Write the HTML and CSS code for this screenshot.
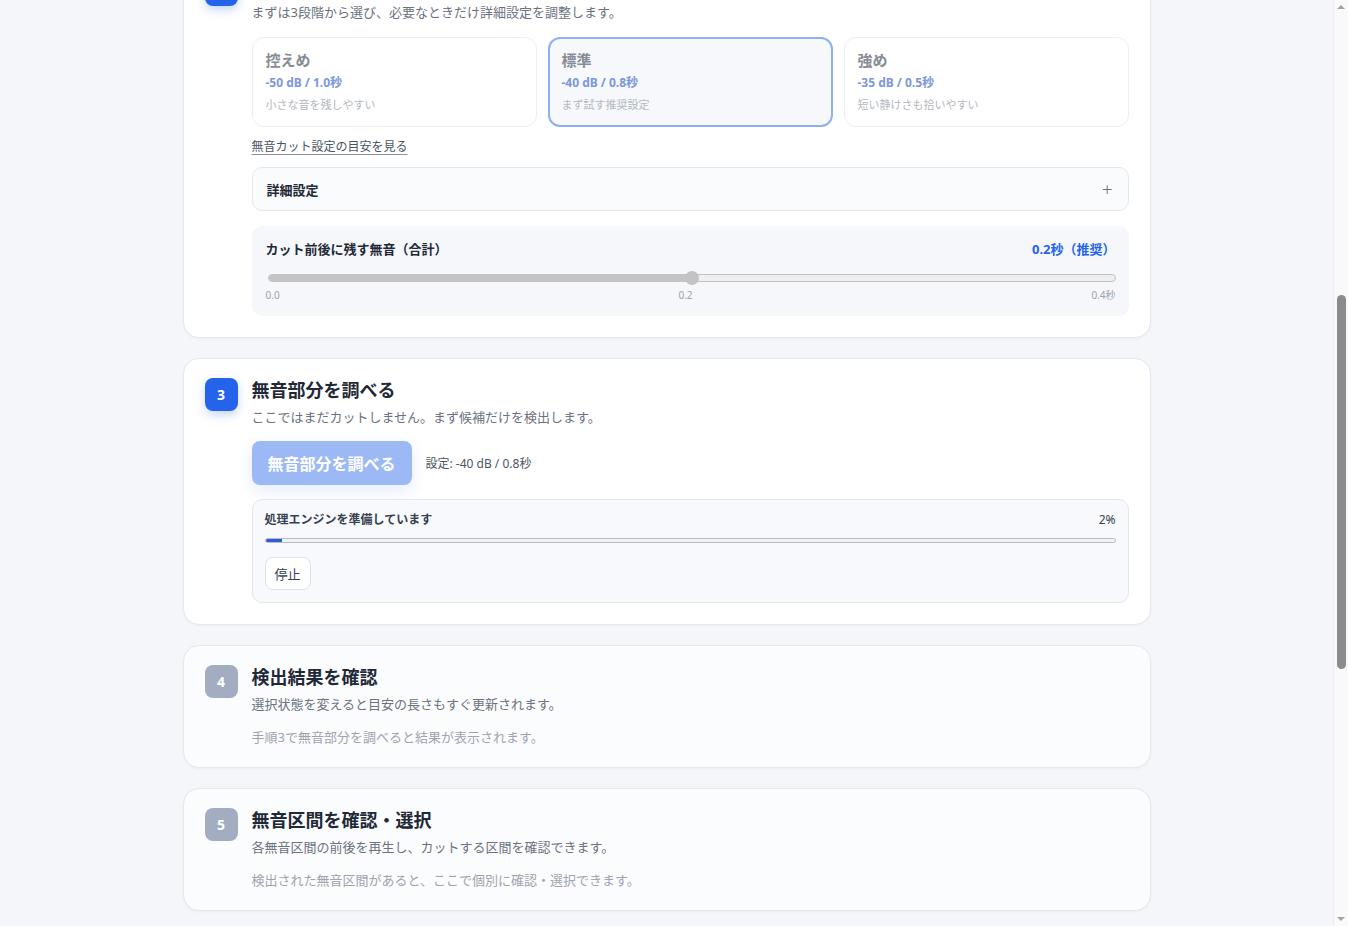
FILE: index.html
```html
<!DOCTYPE html>
<html lang="ja">
<head>
	<meta charset="UTF-8">
	<meta name="viewport" content="width=device-width, initial-scale=1.0">
	<title>無音カット</title>
	<link rel="stylesheet" href="styles.css">
</head>
<body>
	<main class="page">
		<header class="page-head">
			<h1>無音カットツール</h1>
			<p>動画や音声から無音部分を見つけて、まとめてカットします。ファイルはブラウザ内だけで処理されます。</p>
		</header>

		<section class="step">
			<div class="badge">1</div>
			<div class="step-main">
				<h2>ファイルを選ぶ</h2>
				<p class="lead">動画・音声ファイルをドラッグするか、ボタンから選択してください。</p>
				<div class="step-body">
					<div class="drop">
						<strong>ここにファイルをドロップ</strong>
						<span>MP4 / MOV / MP3 / WAV / M4A に対応</span>
						<button class="ghost">ファイルを選択</button>
					</div>
					<div class="file-info">
						<span class="file-name">interview_0412.mp4</span>
						<span class="file-meta">12:48 ・ 286 MB</span>
					</div>
					<div class="wave"></div>
				</div>
			</div>
		</section>

		<section class="step">
			<div class="badge">2</div>
			<div class="step-main">
				<h2>無音カットの強さを選ぶ</h2>
				<p class="lead">まずは3段階から選び、必要なときだけ詳細設定を調整します。</p>
				<div class="step-body">
					<div class="presets">
						<button class="preset">
							<strong>控えめ</strong>
							<span class="preset-val">-50 dB / 1.0秒</span>
							<span class="preset-desc">小さな音を残しやすい</span>
						</button>
						<button class="preset is-active">
							<strong>標準</strong>
							<span class="preset-val">-40 dB / 0.8秒</span>
							<span class="preset-desc">まず試す推奨設定</span>
						</button>
						<button class="preset">
							<strong>強め</strong>
							<span class="preset-val">-35 dB / 0.5秒</span>
							<span class="preset-desc">短い静けさも拾いやすい</span>
						</button>
					</div>
					<a href="#" class="guide">無音カット設定の目安を見る</a>
					<div class="details">
						<span>詳細設定</span>
						<span class="plus">+</span>
					</div>
					<div class="pad-panel">
						<div class="pad-head">
							<span>カット前後に残す無音（合計）</span>
							<span class="pad-val">0.2秒（推奨）</span>
						</div>
						<div class="range">
							<div class="range-fill" style="width: 50%"></div>
							<span class="range-thumb" style="left: 50%"></span>
						</div>
						<div class="ticks">
							<span>0.0</span>
							<span>0.2</span>
							<span>0.4秒</span>
						</div>
					</div>
				</div>
			</div>
		</section>

		<section class="step" id="step-detect">
			<div class="badge">3</div>
			<div class="step-main">
				<h2>無音部分を調べる</h2>
				<p class="lead">ここではまだカットしません。まず候補だけを検出します。</p>
				<div class="step-body">
					<div class="run-row">
						<button class="run" disabled>無音部分を調べる</button>
						<span class="run-setting">設定: -40 dB / 0.8秒</span>
					</div>
					<div class="progress-panel">
						<div class="progress-head">
							<strong>処理エンジンを準備しています</strong>
							<span>2%</span>
						</div>
						<div class="bar"><div class="bar-fill" style="width: 2%"></div></div>
						<button class="stop">停止</button>
					</div>
				</div>
			</div>
		</section>

		<section class="step is-locked">
			<div class="badge">4</div>
			<div class="step-main">
				<h2>検出結果を確認</h2>
				<p class="lead">選択状態を変えると目安の長さもすぐ更新されます。</p>
				<p class="empty">手順3で無音部分を調べると結果が表示されます。</p>
			</div>
		</section>

		<section class="step is-locked">
			<div class="badge">5</div>
			<div class="step-main">
				<h2>無音区間を確認・選択</h2>
				<p class="lead">各無音区間の前後を再生し、カットする区間を確認できます。</p>
				<p class="empty">検出された無音区間があると、ここで個別に確認・選択できます。</p>
			</div>
		</section>

		<section class="step is-locked">
			<div class="badge">6</div>
			<div class="step-main">
				<h2>カットして書き出す</h2>
				<p class="lead">選択した無音区間をまとめてカットし、新しいファイルとして保存します。</p>
				<p class="empty">無音区間を選択すると書き出しできるようになります。</p>
				<div class="step-body">
					<button class="run" disabled>カットして書き出す</button>
				</div>
			</div>
		</section>

		<section class="step is-locked">
			<div class="badge">7</div>
			<div class="step-main">
				<h2>書き出したファイル</h2>
				<p class="lead">書き出しが終わると、ここからダウンロードできます。</p>
				<p class="empty">まだ書き出したファイルはありません。</p>
			</div>
		</section>

		<footer class="foot">ファイルはサーバーに送信されず、すべてお使いのブラウザ内で処理されます。</footer>
	</main>

	<!-- スクロールバー（撮影環境では非表示になるため描画） -->
	<div class="rail">
		<i class="rail-up"></i>
		<span class="rail-thumb"></span>
		<i class="rail-down"></i>
	</div>

	<script>
		// 手順3が画面の決まった位置に来るようにスクロール
		function jumpToStep() {
			let step = document.getElementById('step-detect');
			window.scrollTo(0, step.getBoundingClientRect().top + window.scrollY - 358);
		}
		jumpToStep();
		window.addEventListener('load', jumpToStep, false);
	</script>
</body>
</html>
```

FILE: styles.css
```css
* {
	margin: 0;
	padding: 0;
	box-sizing: border-box;
}
body {
	padding-right: 15px;
	background-color: #f4f6fa;
	font-family: "Noto Sans", "Noto Sans CJK JP", sans-serif;
	color: #1f2937;
}
button {
	font-family: inherit;
	cursor: pointer;
}
.page {
	max-width: 968px;
	margin: 0 auto;
	padding: 32px 0 200px;
}
.page-head {
	margin-bottom: 24px;
	padding: 0 22px;
}
.page-head h1 {
	font-size: 26px;
	line-height: 36px;
}
.page-head p {
	margin-top: 8px;
	font-size: 14px;
	line-height: 22px;
	color: #6b7280;
}

/* step cards */
.step {
	display: grid;
	grid-template-columns: 33px 1fr;
	column-gap: 14px;
	margin-bottom: 20px;
	padding: 19px 21px 21px;
	background-color: #fff;
	border: 1px solid #e4e8ef;
	border-radius: 16px;
	box-shadow: 0 1px 3px rgba(15, 23, 42, .04);
}
.step.is-locked {
	padding-bottom: 20px;
	background-color: #fbfcfd;
}
.badge {
	width: 33px;
	height: 33px;
	display: flex;
	align-items: center;
	justify-content: center;
	border-radius: 8px;
	background-color: #2563eb;
	color: #fff;
	font-size: 14px;
	font-weight: 700;
	box-shadow: 0 4px 10px rgba(37, 99, 235, .25);
}
.is-locked .badge {
	background-color: #a3adc1;
	box-shadow: none;
}
.step h2 {
	font-size: 18px;
	line-height: 24px;
	font-weight: 700;
	color: #1f2937;
}
.lead {
	margin-top: 5px;
	font-size: 13px;
	line-height: 20px;
	color: #6b7280;
}
.empty {
	margin-top: 13px;
	font-size: 13px;
	line-height: 20px;
	color: #9ea4ae;
}
.step-body {
	display: flex;
	flex-direction: column;
	margin-top: 14px;
}

/* step 1 */
.drop {
	height: 220px;
	display: flex;
	flex-direction: column;
	align-items: center;
	justify-content: center;
	gap: 8px;
	border: 2px dashed #d5dbe5;
	border-radius: 12px;
	background-color: #f9fafc;
	font-size: 13px;
	color: #6b7280;
}
.drop strong {
	font-size: 15px;
	color: #374151;
}
.ghost {
	margin-top: 6px;
	height: 34px;
	padding: 0 14px;
	background-color: #fff;
	border: 1px solid #dfe3ea;
	border-radius: 8px;
	font-size: 13px;
}
.file-info {
	margin-top: 12px;
	height: 64px;
	display: flex;
	align-items: center;
	justify-content: space-between;
	padding: 0 14px;
	border: 1px solid #e4e8ee;
	border-radius: 10px;
	font-size: 13px;
}
.file-name {
	font-weight: 700;
}
.file-meta {
	color: #6b7280;
}
.wave {
	margin-top: 12px;
	height: 96px;
	border-radius: 10px;
	background-color: #f5f7fa;
}

/* step 2 */
.presets {
	display: grid;
	grid-template-columns: repeat(3, 1fr);
	gap: 11px;
	margin-top: 1px;
}
.preset {
	display: flex;
	flex-direction: column;
	align-items: flex-start;
	padding: 11px 13px 13px;
	text-align: left;
	background-color: #fff;
	border: 1px solid #eceef2;
	border-radius: 12px;
}
.preset.is-active {
	padding: 10px 12px 12px;
	background-color: #f6f8fc;
	border: 2px solid #8fb0ee;
}
.preset strong {
	font-size: 15px;
	line-height: 22px;
	color: #878c95;
}
.preset-val {
	margin-top: 3px;
	font-size: 12px;
	line-height: 18px;
	font-weight: 700;
	color: #7b97dd;
}
.preset-desc {
	margin-top: 5px;
	font-size: 11px;
	line-height: 16px;
	color: #b3b8c0;
}
.guide {
	align-self: flex-start;
	margin-top: 12px;
	font-size: 12px;
	line-height: 16px;
	color: #4b5563;
	text-decoration: underline;
	text-decoration-color: #8b93a0;
	text-underline-offset: 3px;
}
.details {
	margin-top: 12px;
	height: 44px;
	display: flex;
	align-items: center;
	justify-content: space-between;
	padding: 0 15px 0 14px;
	background-color: #fafbfd;
	border: 1px solid #e4e8ee;
	border-radius: 10px;
	font-size: 13px;
	font-weight: 700;
}
.plus {
	font-size: 19px;
	font-weight: 300;
	color: #6b7280;
}
.pad-panel {
	margin-top: 15px;
	padding: 13px 13px 14px 14px;
	background-color: #f5f7fa;
	border-radius: 10px;
}
.pad-head {
	display: flex;
	justify-content: space-between;
	font-size: 13px;
	line-height: 20px;
	font-weight: 700;
}
.pad-val {
	color: #2563eb;
}
.range {
	position: relative;
	height: 8px;
	margin: 15px 0 0 2px;
	background-color: #efefef;
	border: 1px solid #c2c2c2;
	border-radius: 4px;
}
.range-fill {
	height: 100%;
	background-color: #c4c4c4;
	border-radius: 4px 0 0 4px;
}
.range-thumb {
	position: absolute;
	top: 50%;
	width: 14px;
	height: 14px;
	border-radius: 50%;
	background-color: #c3c3c3;
	transform: translate(-50%, -50%);
}
.ticks {
	margin-top: 6px;
	display: flex;
	justify-content: space-between;
	font-size: 10px;
	line-height: 14px;
	color: #9ca3af;
}

/* step 3 */
.run-row {
	display: flex;
	align-items: center;
	gap: 14px;
}
.run {
	align-self: flex-start;
	height: 44px;
	padding: 0 16px;
	background-color: #9cb9f5;
	border: 0;
	border-radius: 8px;
	font-size: 16px;
	font-weight: 700;
	color: #fff;
	box-shadow: 0 6px 16px rgba(37, 99, 235, .12);
}
.run-setting {
	font-size: 12px;
	color: #4b5563;
}
.progress-panel {
	margin-top: 14px;
	padding: 11px 12px 12px;
	background-color: #f7f9fc;
	border: 1px solid #e3e7ee;
	border-radius: 10px;
}
.progress-head {
	display: flex;
	justify-content: space-between;
	font-size: 12px;
	line-height: 18px;
	color: #374151;
}
.bar {
	margin-top: 9px;
	height: 5px;
	background-color: #f1f2f4;
	border: 1px solid #b8bcc2;
	border-radius: 3px;
	overflow: hidden;
}
.bar-fill {
	height: 100%;
	background-color: #2d5fd3;
}
.stop {
	display: block;
	margin-top: 14px;
	height: 33px;
	padding: 0 9px;
	background-color: #fff;
	border: 1px solid #dfe3ea;
	border-radius: 8px;
	font-size: 13px;
	color: #374151;
}
.foot {
	margin-top: 28px;
	text-align: center;
	font-size: 12px;
	color: #9ca3af;
}

/* scrollbar */
.rail {
	position: fixed;
	top: 0;
	right: 0;
	bottom: 0;
	width: 15px;
	background-color: #f9f9f9;
	border-left: 1px solid #efefef;
}
.rail-thumb {
	position: absolute;
	top: 295px;
	left: 3px;
	width: 9px;
	height: 374px;
	border-radius: 5px;
	background-color: #8b8b8b;
}
.rail-up,
.rail-down {
	position: absolute;
	left: 3px;
	width: 0;
	height: 0;
	border-left: 4px solid transparent;
	border-right: 4px solid transparent;
}
.rail-up {
	top: 5px;
	border-bottom: 4px solid #a3a3a3;
}
.rail-down {
	bottom: 5px;
	border-top: 4px solid #a3a3a3;
}
```
